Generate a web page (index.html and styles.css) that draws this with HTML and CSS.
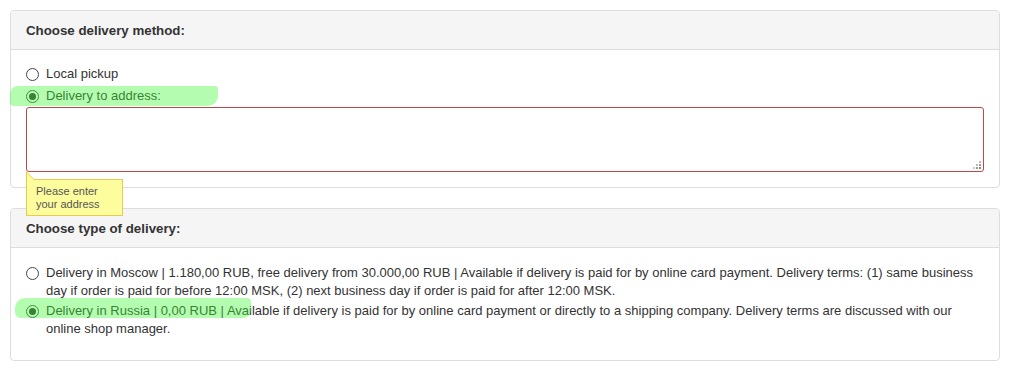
FILE: index.html
```html
<!DOCTYPE html>
<html lang="en">
<head>
<meta charset="UTF-8" />
<title>Checkout - delivery</title>
<link rel="stylesheet" href="styles.css">
</head>
<body>

<!-- Способ доставки -->
<div class="panel">
  <div class="panel-heading">Choose delivery method:</div>
  <div class="panel-body method-body">
    <label class="radio-row">
      <span class="radio"></span>
      <span>Local pickup</span>
    </label>
    <label class="radio-row">
      <span class="marker marker-method"></span>
      <span class="radio checked"></span>
      <span>Delivery to address:</span>
    </label>
    <div class="address-box">
      <textarea class="address-input"></textarea>
      <svg class="grip" width="8" height="8" viewBox="0 0 8 8">
        <rect x="6" y="0" width="2" height="2" fill="#bbb"/>
        <rect x="3" y="3" width="2" height="2" fill="#bbb"/>
        <rect x="6" y="3" width="2" height="2" fill="#999"/>
        <rect x="0" y="6" width="2" height="2" fill="#ccc"/>
        <rect x="3" y="6" width="2" height="2" fill="#999"/>
        <rect x="6" y="6" width="2" height="2" fill="#888"/>
      </svg>
      <div class="hint">Please enter<br>your address</div>
    </div>
  </div>
</div>

<!-- Тип доставки -->
<div class="panel">
  <div class="panel-heading">Choose type of delivery:</div>
  <div class="panel-body type-body">
    <label class="radio-row">
      <span class="radio"></span>
      <span class="radio-text">Delivery in Moscow | 1.180,00 RUB, free delivery from 30.000,00 RUB | Available if delivery is paid for by online card payment. Delivery terms: (1) same business day if order is paid for before 12:00 MSK, (2) next business day if order is paid for after 12:00 MSK.</span>
    </label>
    <label class="radio-row">
      <span class="marker marker-type"></span>
      <span class="radio checked"></span>
      <span class="radio-text">Delivery in Russia | 0,00 RUB | Available if delivery is paid for by online card payment or directly to a shipping company. Delivery terms are discussed with our online shop manager.</span>
    </label>
  </div>
</div>

</body>
</html>
```

FILE: styles.css
```css
* {
  box-sizing: border-box;
}
body {
  margin: 10px;
  font-family: "Liberation Sans", Arial, sans-serif;
  font-size: 13px;
  color: #333;
  background: #fff;
}

.panel {
  border: 1px solid #ddd;
  border-radius: 4px;
  background: #fff;
  margin-bottom: 20px;
}
.panel:last-child {
  margin-bottom: 0;
}
.panel-heading {
  background: #f5f5f5;
  border-bottom: 1px solid #ddd;
  border-radius: 3px 3px 0 0;
  height: 39px;
  padding: 1px 15px 0;
  line-height: 38px;
  font-weight: bold;
  font-size: 13.3px;
}
.method-body {
  padding: 15px 15px 15px;
}
.type-body {
  padding: 16px 15px 20px;
}

/* radio rows */
.radio-row {
  position: relative;
  display: flex;
  align-items: flex-start;
  gap: 7px;
  line-height: 18px;
  margin-bottom: 4px;
}
.type-body .radio-row {
  margin-bottom: 2px;
}
.radio-text {
  flex: 1;
}
.radio {
  flex-shrink: 0;
  width: 13px;
  height: 13px;
  margin-top: 3px;
  border: 1px solid #444;
  border-radius: 50%;
  background: #fff;
  position: relative;
}
.radio.checked::after {
  content: "";
  position: absolute;
  left: 2px;
  top: 2px;
  width: 7px;
  height: 7px;
  border-radius: 50%;
  background: #333;
}

/* зелёный маркер */
.marker {
  position: absolute;
  background: rgba(67, 247, 57, 0.4);
  border-radius: 8px 3px 10px 4px;
  filter: blur(0.6px);
  z-index: 2;
  pointer-events: none;
}
.marker-method {
  left: -16px;
  top: -1px;
  width: 208px;
  height: 20px;
}
.marker-type {
  left: -11px;
  top: -4px;
  width: 236px;
  height: 20px;
  border-radius: 10px 4px 8px 6px;
}

/* адрес */
.address-box {
  position: relative;
  margin-top: -2px;
}
.address-input {
  display: block;
  width: 100%;
  height: 65px;
  border: 1px solid #b94a48;
  border-radius: 3px;
  font-family: inherit;
  font-size: 12px;
  outline: none;
  resize: none;
}
.grip {
  position: absolute;
  right: 3px;
  bottom: 3px;
}
.hint {
  position: absolute;
  left: 0;
  top: 72px;
  z-index: 3;
  width: 97px;
  padding: 5px 8px 4px 9px;
  background: #fefd9e;
  border: 1px solid #e7cb4c;
  font-size: 11px;
  line-height: 13px;
  color: #555;
}
.hint::before,
.hint::after {
  content: "";
  position: absolute;
  width: 0;
  height: 0;
  border-top: 8px solid transparent;
}
.hint::before {
  left: -1px;
  top: -9px;
  border-left: 9px solid #e7cb4c;
  border-top-width: 9px;
}
.hint::after {
  left: 0;
  top: -7px;
  border-left: 7px solid #fefd9e;
  border-top-width: 7px;
}
```
